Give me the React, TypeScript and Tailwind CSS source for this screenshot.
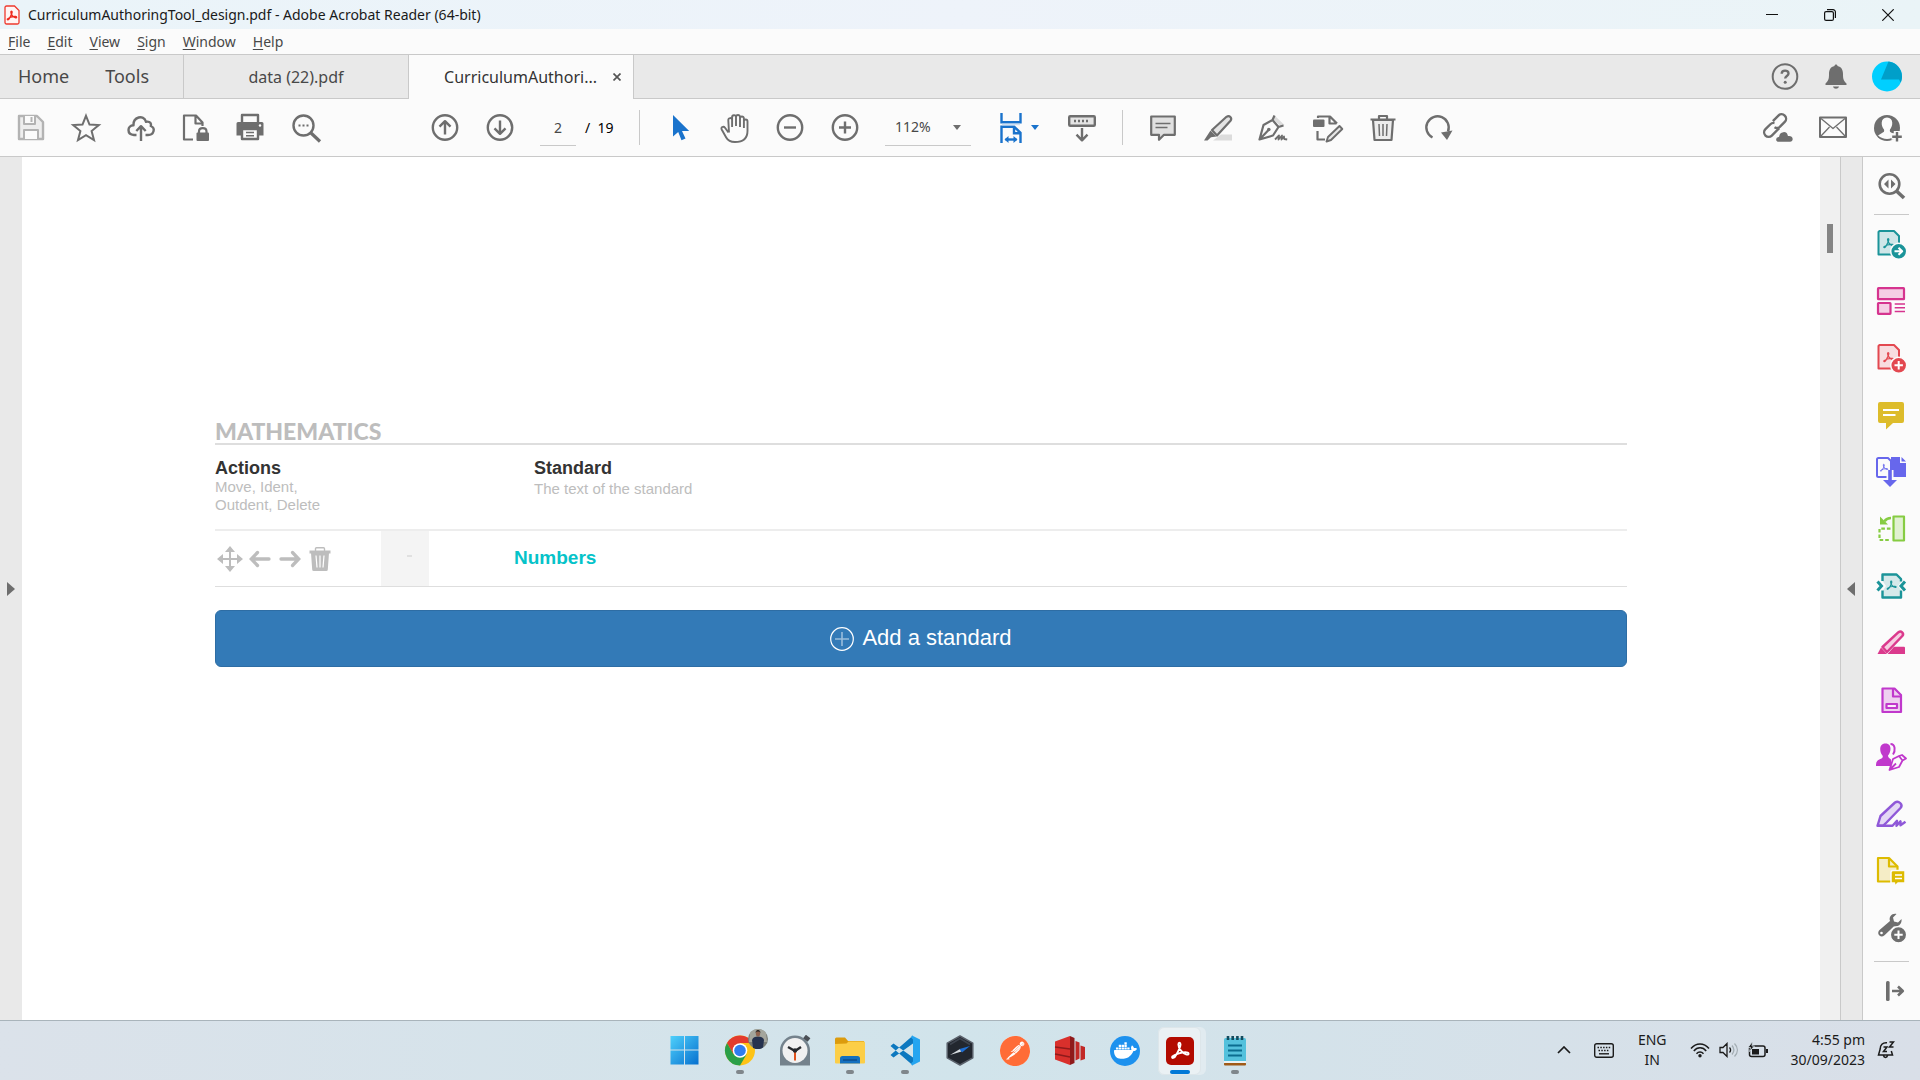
import type { ReactNode } from "react";
import { SiDocker, SiPostman } from "react-icons/si";

const G = "#6e6e6e";
const TREFOIL =
  "M-7 5C-8 7-5 7-3.5 3.5C-1.5 0 .5-3.5.5-6C.5-8-1.5-8-1.5-6C-1.5-2 2.5 2 5.5 3C8.5 4 8.5 1.5 6 1.2C2 1-4 2.5-7 5Z";

function Icon({ children, stroke = G, w = 2.4 }: { children: ReactNode; stroke?: string; w?: number }) {
  return (
    <svg
      viewBox="0 0 32 32"
      className="size-8 shrink-0"
      fill="none"
      stroke={stroke}
      strokeWidth={w}
      strokeLinejoin="round"
      aria-hidden="true"
    >
      {children}
    </svg>
  );
}

function ToolButton({ label, children }: { label: string; children: ReactNode }) {
  return (
    <button aria-label={label} className="flex h-full w-[55px] shrink-0 items-center justify-center">
      {children}
    </button>
  );
}

function SideButton({ label, children }: { label: string; children: ReactNode }) {
  return (
    <button aria-label={label} className="flex h-[57px] w-full shrink-0 items-center justify-center">
      {children}
    </button>
  );
}

function TaskButton({ label, open, children }: { label: string; open?: boolean; children: ReactNode }) {
  return (
    <button aria-label={label} className="relative flex h-full w-[55px] items-center justify-center">
      {children}
      {open && <span className="absolute bottom-[6px] h-1 w-2 rounded-full bg-[#7f868b]" />}
    </button>
  );
}

function TitleBar() {
  return (
    <header className="flex h-[29px] items-center bg-gradient-to-r from-[#eaf4f9] via-[#eef3fa] to-[#eaf4f7]">
      <svg viewBox="0 0 16 20" className="ml-1 h-5 w-4" aria-hidden="true">
        <path d="M2.500 1h8L15 5.500V17.500a1.500 1.500 0 0 1-1.500 1.500h-11A1.500 1.500 0 0 1 1 17.500v-15A1.500 1.500 0 0 1 2.500 1z" fill="#fff5f4" stroke="#ee3a2e" strokeWidth="1.300" />
        <g transform="translate(7.800 10.800) scale(.62)">
          <path d={TREFOIL} fill="none" stroke="#ee2a1e" strokeWidth="2.200" />
        </g>
      </svg>
      <h1 className="ml-2 text-sm text-[#1a1a1a]">CurriculumAuthoringTool_design.pdf - Adobe Acrobat Reader (64-bit)</h1>
      <div className="ml-auto flex h-full pr-[3px]">
        <button aria-label="Minimize" className="flex w-[58px] items-center justify-center">
          <svg viewBox="0 0 12 12" className="size-3" stroke="#111"><path d="M0 5.500h12" /></svg>
        </button>
        <button aria-label="Restore" className="flex w-[58px] items-center justify-center">
          <svg viewBox="0 0 12 12" className="size-3" fill="none" stroke="#111" strokeWidth="1.200">
            <rect x=".6" y="2.600" width="8.800" height="8.800" rx="1.500" />
            <path d="M3 .7h6a2.400 2.400 0 0 1 2.400 2.400V9" />
          </svg>
        </button>
        <button aria-label="Close" className="flex w-[58px] items-center justify-center">
          <svg viewBox="0 0 12 12" className="size-3" stroke="#111" strokeWidth="1.200"><path d="M.3.3l11.400 11.400M11.700.3L.3 11.700" /></svg>
        </button>
      </div>
    </header>
  );
}

const MENU = ["File", "Edit", "View", "Sign", "Window", "Help"];

function MenuBar() {
  return (
    <nav className="flex h-[26px] items-center gap-[17px] border-b border-[#c9c9c9] bg-[#fbfbfb] pl-2 text-sm text-[#484848]">
      {MENU.map((m) => (
        <button key={m}>
          <span className="underline underline-offset-2">{m[0]}</span>
          {m.slice(1)}
        </button>
      ))}
    </nav>
  );
}

function Tabs() {
  return (
    <div className="flex h-11 bg-[#e9e9e9] text-[#484848]">
      <div className="flex w-[184px] items-center gap-9 border-r border-b border-[#c9c9c9] pb-0.5 pl-[18px] text-lg">
        <button>Home</button>
        <button>Tools</button>
      </div>
      <button className="w-[225px] border-r border-b border-[#c9c9c9] text-base">data (22).pdf</button>
      <div className="flex w-[225px] items-center justify-end border-r border-[#c9c9c9] bg-[#fbfbfb] pr-3">
        <button className="text-base text-[#333]">CurriculumAuthori...</button>
        <button aria-label="Close tab" className="ml-4">
          <svg viewBox="0 0 8 8" className="size-2" stroke="#555" strokeWidth="1.700"><path d="M.5.5l7 7M7.500.5l-7 7" /></svg>
        </button>
      </div>
      <div className="flex grow items-center justify-end border-b border-[#c9c9c9] pr-2">
        <button aria-label="Help" className="flex w-[51px] justify-center">
          <Icon w={2}>
            <circle cx="16" cy="15.500" r="12.300" />
            <path d="M12.700 12.700c0-4.200 6.800-4 6.800-.3 0 2.600-3.300 2.500-3.300 5.100" strokeWidth="2.400" />
            <circle cx="16.200" cy="21.300" r="1.500" fill={G} stroke="none" />
          </Icon>
        </button>
        <button aria-label="Notifications" className="flex w-[51px] justify-center">
          <Icon>
            <path d="M14.500 5c0-2 3-2 3 0 4 .8 5.500 4 5.500 8 0 5 .5 6.500 3.500 9.500V24h-21v-1.500C8.500 19.500 9 18 9 13c0-4 1.500-7.200 5.500-8zM13 25.500h6c-.8 2.900-5.200 2.900-6 0z" fill={G} stroke="none" />
          </Icon>
        </button>
        <button aria-label="Account" className="flex w-[51px] justify-center">
          <Icon>
            <circle cx="16" cy="15.500" r="15" fill="#00cfff" stroke="none" />
            <path d="M17.500.6C26 1.700 31 8.500 31 15.500c0 2.300-.5 4.200-1.300 6l-1.700-3H10z" fill="#009fc9" stroke="none" />
          </Icon>
        </button>
      </div>
    </div>
  );
}

function Toolbar() {
  return (
    <div role="toolbar" className="flex h-[58px] items-center border-b border-[#c9c9c9] bg-[#fbfbfb] pl-[3px] text-sm">
      <ToolButton label="Save">
        <Icon stroke="#b3b3b3">
          <path d="M4 4h18l6 6v17H4z" fill="#eee" />
          <path d="M9 4v8h11V4M9 27v-9h14v9" fill="#fbfbfb" strokeWidth="2" />
          <path d="M16.500 5v5" strokeWidth="2" />
        </Icon>
      </ToolButton>
      <ToolButton label="Star">
        <Icon w={2}>
          <path d="M16 3.800l3.500 8.700 9.300.6-7.200 5.900 2.400 9.100-8-5-8 5 2.400-9.100-7.200-5.900 9.300-.6z" strokeLinejoin="miter" />
        </Icon>
      </ToolButton>
      <ToolButton label="Upload">
        <Icon>
          <path d="M11.500 23H9c-7.500-.5-7-9.500-.5-9.700C8 5 18.500 2 21 9.800c4.500-.8 5.500 2 4.800 4.200 5 2 3.200 9-2.800 9h-2.500" />
          <path d="M16 29V14.500M11.300 19l4.700-4.800 4.700 4.800" />
        </Icon>
      </ToolButton>
      <ToolButton label="Protect">
        <Icon w={2.2}>
          <path d="M13 27.500H4v-24h12l6.500 7V14M15.500 4v7.500h7" />
          <rect x="16.500" y="20.500" width="12.500" height="8.500" rx="1" fill={G} stroke="none" />
          <path d="M19 21v-1.500c0-4.500 7.500-4.500 7.500 0V21" />
        </Icon>
      </ToolButton>
      <ToolButton label="Print">
        <Icon>
          <path d="M7 10.500V3h16v7.500" />
          <path d="M3 10h24a1.500 1.500 0 0 1 1.500 1.500v12H24v-6H6v6H1.500v-12A1.500 1.500 0 0 1 3 10z" fill={G} stroke="none" />
          <path d="M7 17h16v10H7z" fill="#fbfbfb" />
          <path d="M11 20.500h8M11 23.700h8" strokeWidth="1.500" />
          <circle cx="25" cy="13.500" r="1.200" fill="#fff" stroke="none" />
        </Icon>
      </ToolButton>
      <ToolButton label="Find">
        <Icon>
          <circle cx="13.500" cy="13.500" r="10" />
          <path d="M20.500 20.500L30 29.500" strokeWidth="3.200" />
          <path d="M8.500 13.500h2M12.500 13.500h2M16.500 13.500h2" strokeWidth="2" />
        </Icon>
      </ToolButton>

      <div className="ml-[84px] flex h-full">
        <ToolButton label="Previous page">
          <Icon>
            <circle cx="16" cy="15.500" r="12.200" />
            <path d="M16 22.500v-13M10.500 14.700L16 9.200l5.500 5.500" />
          </Icon>
        </ToolButton>
        <ToolButton label="Next page">
          <Icon>
            <circle cx="16" cy="15.500" r="12.200" />
            <path d="M16 8.500v13M10.500 16.300l5.500 5.500 5.500-5.500" />
          </Icon>
        </ToolButton>
      </div>
      <input
        aria-label="Page number"
        defaultValue="2"
        className="ml-[13px] h-9 w-9 border-b border-[#c9c9c9] bg-transparent text-center text-[#484848]"
      />
      <span className="ml-[9px] w-[54px] text-black">/&nbsp; 19</span>
      <div className="h-[35px] w-px bg-[#c9c9c9]" />

      <div className="ml-3 flex h-full">
        <ToolButton label="Select">
          <Icon>
            <path d="M9 3v21.500l5.200-4.500 3.300 8.300 4-1.700-3.500-7.600h7.200z" fill="#1a73cc" stroke="none" />
          </Icon>
        </ToolButton>
        <ToolButton label="Pan">
          <Icon w={1.900}>
            <path d="M9.500 20.500L6 15.800c-1.500-2-4.500-.7-3.300 1.700l4.500 8C9 28.800 12 30 16 30c8 0 12.500-4 12.500-11V9.500c0-2.600-3.600-2.600-3.600 0V16M24.900 15V6.500c0-2.600-3.900-2.600-3.900 0V15M21 14V5c0-2.600-4-2.600-4 0v9M17 14V5c0-2.600-4.200-2.200-3.900.5V15M13.100 8c0-2.600-3.900-2.600-3.800.2l.7 12.300" />
          </Icon>
        </ToolButton>
        <ToolButton label="Zoom out">
          <Icon>
            <circle cx="16" cy="15.500" r="12.200" />
            <path d="M10 15.500h12" />
          </Icon>
        </ToolButton>
        <ToolButton label="Zoom in">
          <Icon>
            <circle cx="16" cy="15.500" r="12.200" />
            <path d="M10 15.500h12M16 9.500v12" />
          </Icon>
        </ToolButton>
      </div>
      <div className="relative ml-[13px] flex w-[86px] items-center">
        <select
          aria-label="Zoom level"
          className="h-9 w-full appearance-none border-b border-[#c9c9c9] bg-transparent pl-2.5 text-[#484848]"
        >
          <option>112%</option>
        </select>
        <svg viewBox="0 0 8 5" className="pointer-events-none absolute right-2.5 h-[5px] w-2" fill={G}><path d="M0 0h8L4 5z" /></svg>
      </div>
      <button aria-label="Fit width" className="ml-6 flex h-full w-[59px] items-center">
        <Icon stroke="#1a73cc">
          <path d="M6.500 1v9.300h19V1M6.500 31V14.800h12.700l6.300 6V31M19 15v6.300h6" strokeLinejoin="miter" />
          <path d="M7 12.500h18" stroke="#cfe0f2" strokeWidth="1.500" />
          <path d="M10.500 27.500h11" />
          <path d="M13.500 24L9.500 27.500l4 3.500zM18.500 24l4 3.500-4 3.500z" fill="#1a73cc" stroke="none" />
        </Icon>
        <svg viewBox="0 0 8 5" className="ml-1 h-[5px] w-2" fill="#1a73cc"><path d="M0 0h8L4 5z" /></svg>
      </button>
      <ToolButton label="Read mode">
        <Icon>
          <rect x="3.200" y="4.200" width="25.600" height="9.600" rx="1" fill="#e4e4e4" />
          <path d="M8 9h2M12 9h2M16 9h2M20 9h2" />
          <path d="M16 16v12M10.500 22.700l5.500 5.600 5.500-5.600" />
        </Icon>
      </ToolButton>
      <div className="ml-[13px] h-[35px] w-px bg-[#c9c9c9]" />

      <div className="ml-3 flex h-full">
        <ToolButton label="Comment">
          <Icon w={2.200}>
            <path d="M4.200 4.500h23.600v18.300H17l-5 5v-5H4.200z" fill="#e0e0e0" />
            <path d="M8.500 11.500h15M8.500 15.500h12" strokeWidth="1.500" />
          </Icon>
        </ToolButton>
        <ToolButton label="Highlight">
          <Icon w={2.2}>
            <path d="M11 28.500l8-6h11v6z" fill="#dcdcdc" stroke="none" />
            <path d="M10 18L24.500 4.800c3-2 6 1.200 4 4L15 23.500z" fill="#e4e4e4" />
            <path d="M8.500 18.500l6 6-5.500.8L5.500 28.500H2z" fill={G} stroke="none" />
          </Icon>
        </ToolButton>
        <ToolButton label="Sign">
          <Icon w={2.200}>
            <path d="M17.500 3.500l10 9.500-3.500 1.500-8-7.500z" fill="#dcdcdc" stroke="none" />
            <path d="M17.500 3.500L15.500 8 6.500 13 2.500 27.500 16 23.500 21.500 15l5-1.500M15.500 8l6 7M3 27l8.500-9" />
            <circle cx="11.800" cy="17.500" r="1.800" fill={G} stroke="none" />
            <path d="M18 27.500l4-4-.5 4 3.500-4-.5 4 2.500-3 .2 2.500 3 .5" strokeWidth="1.800" />
          </Icon>
        </ToolButton>
        <ToolButton label="Edit">
          <Icon w={2.200}>
            <path d="M6 6V4.500h12l7 7M17.500 5v6.500h7M5.500 19v8.500h7.500" />
            <rect x="1" y="7.500" width="11.500" height="7.500" rx="1" fill={G} stroke="none" />
            <path d="M14.500 29.500l1.500-4.500 11.500-11 2.800 3L19 28z" fill="#e8e8e8" strokeWidth="1.900" />
          </Icon>
        </ToolButton>
        <ToolButton label="Delete">
          <Icon w={2.200}>
            <path d="M3.500 7.500h25M12 7V4h8v3" />
            <path d="M6 8h20l-1.500 20h-17z" fill="#ededed" />
            <path d="M12 12l.5 12M16 12v12M20 12l-.5 12" strokeWidth="1.500" />
          </Icon>
        </ToolButton>
        <ToolButton label="Rotate">
          <Icon>
            <path d="M10.500 25.500A11.200 11.200 0 1 1 26 19.500" />
            <path d="M19 20.500l11.500-2-5.500 9.500z" fill={G} stroke="none" />
          </Icon>
        </ToolButton>
      </div>

      <div className="ml-auto flex h-full pr-[5px]">
        <ToolButton label="Share link">
          <Icon>
            <g transform="rotate(-45 13 14)">
              <path d="M14.500 18.500H4a4.500 4.500 0 0 1 0-9h7a4.500 4.500 0 0 1 3.800 2" />
              <path d="M11.800 14.500a4.500 4.500 0 0 0 4 3.500h7a4.500 4.500 0 0 0 0-9H15" />
            </g>
            <path d="M17 30.500c-5 0-4.500-6-.5-6.300.5-5.500 8.500-7 10-1 6-.5 6.500 7.300 1.500 7.300z" fill={G} stroke="#fbfbfb" strokeWidth="1.500" />
          </Icon>
        </ToolButton>
        <ToolButton label="Email">
          <Icon w={2}>
            <rect x="3" y="5.500" width="26" height="19.500" />
            <path d="M4 6.500l12 10 12-10M4 24l8.500-9M28 24l-8.500-9" strokeWidth="1.300" />
          </Icon>
        </ToolButton>
        <ToolButton label="Add people">
          <Icon>
            <circle cx="15" cy="16" r="13" fill={G} stroke="none" />
            <path d="M15 5.500c7 0 6 9 3 12-.5 2 0 2.500 2 3.500l4 2.500c-5 4.500-13 4.500-18 0l4-2.500c2-1 2.500-1.500 2-3.500-3-3-4-12 3-12z" fill="#fbfbfb" stroke="none" />
            <path d="M25 19v11M19.500 24.500h11" stroke="#fbfbfb" strokeWidth="6.500" />
            <path d="M25 20v9.500M20.200 24.700h9.600" />
          </Icon>
        </ToolButton>
      </div>
    </div>
  );
}

function DocMark({ color, x = 13.5, y = 15.5, s = 0.65 }: { color: string; x?: number; y?: number; s?: number }) {
  return (
    <g transform={`translate(${x} ${y}) scale(${s})`}>
      <path d={TREFOIL} fill="none" stroke={color} strokeWidth="1.900" />
    </g>
  );
}

function ToolsPane() {
  return (
    <aside className="flex w-[58px] shrink-0 flex-col items-center border-l border-[#c9c9c9] bg-[#fbfbfb] pr-px">
      <SideButton label="Search tools">
        <Icon w={2.600}>
          <circle cx="14.500" cy="14" r="9.800" />
          <path d="M21.500 21l7.500 7" strokeWidth="3.600" />
          <path d="M13.500 9.500v9L9 14zM16 9.500v9l4.500-4.500z" fill={G} stroke="none" />
        </Icon>
      </SideButton>
      <hr className="w-[35px] border-[#c9c9c9]" />
      <SideButton label="Export PDF">
        <Icon stroke="#1b9499" w={2}>
          <path d="M4.500 3h14.500l5 5v18.500h-20.500V4z" fill="#cfe6e8" />
          <DocMark color="#1b9499" />
          <circle cx="23.700" cy="23.300" r="8" fill="#1b9499" stroke="#fbfbfb" strokeWidth="1.500" />
          <path d="M19.500 23.300h7M23.500 19.800l3.700 3.500-3.700 3.500" stroke="#fff" />
        </Icon>
      </SideButton>
      <SideButton label="Organize pages">
        <Icon stroke="#d6348f" w={2.200}>
          <rect x="3" y="3.200" width="26" height="11" rx=".5" fill="#f5cfe5" />
          <rect x="3" y="18" width="12.500" height="10.800" rx=".5" fill="#f5cfe5" />
          <path d="M19.700 19h10.300M19.700 22.800h10.300M19.700 26.600h10.300" strokeWidth="1.500" />
        </Icon>
      </SideButton>
      <SideButton label="Create PDF">
        <Icon stroke="#e34850" w={2}>
          <path d="M4.500 3h14.500l5 5v18.500h-20.500V4z" fill="#f8dcdf" />
          <DocMark color="#e34850" />
          <circle cx="23.700" cy="23.300" r="8" fill="#e34850" stroke="#fbfbfb" strokeWidth="1.500" />
          <path d="M19.500 23.300h8.400M23.700 19.100v8.400" stroke="#fff" />
        </Icon>
      </SideButton>
      <SideButton label="Add comments">
        <Icon>
          <path d="M5 3h22a2 2 0 0 1 2 2v17a2 2 0 0 1-2 2h-9l-7 6.500V24H5a2 2 0 0 1-2-2V5a2 2 0 0 1 2-2z" fill="#ddbc2b" stroke="none" />
          <path d="M8 11h16M8 16h12.500" stroke="#fff" strokeWidth="2" />
        </Icon>
      </SideButton>
      <SideButton label="Combine files">
        <Icon stroke="#6767ec" w={2}>
          <path d="M16 1h9v6h6v14H16z" fill="#6767ec" stroke="none" />
          <path d="M26.500 1L31 5.500h-4.500z" fill="#6767ec" stroke="none" />
          <path d="M2 3.500A1.500 1.500 0 0 1 3.500 2h9.500l3 3v16H3.500A1.500 1.500 0 0 1 2 19.500z" fill="#fbfbfb" />
          <DocMark color="#6767ec" x={9} y={12} s={0.5} />
          <path d="M15 14v11" stroke="#fbfbfb" strokeWidth="7" />
          <path d="M15 14v12" strokeWidth="3.600" />
          <path d="M8 24h14l-7 7z" fill="#6767ec" stroke="none" />
        </Icon>
      </SideButton>
      <SideButton label="Crop pages">
        <Icon stroke="#86cc42" w={2.200}>
          <rect x="18.500" y="3.500" width="10.500" height="24" fill="#e1f1d2" />
          <path d="M15.500 15.700H4.500v11.300H15.500" strokeDasharray="3.600 2" />
          <path d="M16 5c-3 0-5 1-6.500 3.200" strokeWidth="2.600" />
          <path d="M5 3.500v8h8z" fill="#86cc42" stroke="none" />
        </Icon>
      </SideButton>
      <SideButton label="Compress PDF">
        <Icon stroke="#1b9499" w={2.400}>
          <path d="M7.500 4.500h14L26 9v3l-3 4 3 4v7.500H7.500V21l3.500-5-3.500-5z" fill="#d5e9ea" stroke="none" />
          <path d="M7.500 11V4.500h14L26 9v2.500M7.500 20.500v7H26v-7" />
          <DocMark color="#1b9499" x={16.5} y={15.5} s={0.6} />
          <path d="M2.500 11.500L6.500 16l-4 4.500M30 11.500L26 16l4 4.500" strokeWidth="3" strokeLinejoin="miter" />
        </Icon>
      </SideButton>
      <SideButton label="Redact">
        <Icon stroke="#db3a8d" w={2.500}>
          <path d="M19 19.700h10a1 1 0 0 1 1 1V27H12.500z" fill="#db3a8d" stroke="none" />
          <path d="M7.500 20L23.500 5.200c2.500-2 6 1 3.800 3.800L12 25z" fill="#f7cfe2" />
          <path d="M6 20.500l6 6.500H2.500z" fill="#db3a8d" stroke="none" />
        </Icon>
      </SideButton>
      <SideButton label="Prepare form">
        <Icon stroke="#c038cc" w={2.200}>
          <path d="M7.500 4.500h12l6.500 6.500v17H7.500z" fill="#eed0f0" />
          <path d="M18 5v7.500h8" />
          <rect x="11.500" y="20" width="10.500" height="4" fill="#fbeefb" />
        </Icon>
      </SideButton>
      <SideButton label="Request e-signatures">
        <Icon stroke="#c038cc" w={2}>
          <path d="M10.500 2.500c7 0 5.500 9 2.500 12 0 2.500 2 3 3 4v6.500H1c0-5 1.500-6 5.500-7.500 1.500-1 1.500-1.500 1-3-3-3-4-12 3-12z" fill="#c038cc" stroke="none" />
          <path d="M15.500 3c5 0 5 7 2.500 10.500" />
          <path d="M24 15l-6 3-3.500 11 9.500-3 3.500-6.500zM15 28.500l6-6M24 15l3.500 4.500 3.500-2-4-3.500z" fill="#fbfbfb" strokeWidth="1.800" />
        </Icon>
      </SideButton>
      <SideButton label="Fill and sign">
        <Icon stroke="#8f58d8" w={2.400}>
          <path d="M5.500 18L20 4.500c3.500-2.500 8.500 2 5.500 5.500L11.500 24.500 8 27.800H2.500z" fill="#e4d8f5" />
          <path d="M3 27.800h14.500l4.500-5-.5 5 4-4.500v4l5-3.500" />
        </Icon>
      </SideButton>
      <SideButton label="Send for comments">
        <Icon stroke="#ddbb00" w={2.200}>
          <path d="M3 3h11l8.500 8.500v15H3z" fill="#f5edc6" />
          <path d="M14 3v8.500h8.500" />
          <path d="M17 15.500h13V28h-7L19.500 31.500V28H16V17z" fill="#ddbb00" stroke="#fbfbfb" strokeWidth="1.500" />
          <path d="M20 20h7M20 23.500h7" stroke="#fff" strokeWidth="1.500" />
        </Icon>
      </SideButton>
      <SideButton label="More tools">
        <Icon>
          <path d="M21.500 2L18 5.500l1 4 4 1L26.500 7c.8 5-3.500 8.500-7.500 7.200l-9.500 9c-4 3.500-8.500-1.500-5-5.200l10.500-9C13.500 5 17 1 21.500 2z" fill={G} stroke="none" />
          <circle cx="6.500" cy="21" r="1.300" fill="#fff" stroke="none" />
          <circle cx="23.500" cy="22.700" r="8.200" fill={G} stroke="#fbfbfb" strokeWidth="1.500" />
          <path d="M19.300 22.700h8.400M23.500 18.500v8.400" stroke="#fff" strokeWidth="2" />
        </Icon>
      </SideButton>
      <hr className="mt-[5px] w-[35px] border-[#c9c9c9]" />
      <SideButton label="Collapse pane">
        <Icon>
          <rect x="11" y="6" width="3.600" height="20" rx="1.500" fill={G} stroke="none" />
          <path d="M17 16h10.500M23 11.500l4.800 4.500-4.800 4.500" strokeWidth="2.600" />
        </Icon>
      </SideButton>
    </aside>
  );
}

function Document() {
  return (
    <main className="grow bg-white px-[193px] pt-[262px] font-['Liberation_Sans',Arial,sans-serif]">
      <h2 className="border-b-2 border-[#dedede] font-['Lato',sans-serif] text-[23px] leading-6 font-black text-[#bdbdbd]">
        MATHEMATICS
      </h2>
      <table className="w-full table-fixed border-separate border-spacing-0 text-left">
        <colgroup>
          <col className="w-[166px]" />
          <col className="w-12" />
          <col />
        </colgroup>
        <thead>
          <tr className="align-top text-[15px] leading-[18px] text-[#bdbdbd]">
            <th scope="col" colSpan={2} className="border-b-2 border-[#ededed] pt-[13px] pb-[15px] font-normal">
              <div className="text-[18px] leading-5 font-bold text-[#333]">Actions</div>
              Move, Ident,
              <br />
              Outdent, Delete
            </th>
            <th scope="col" className="border-b-2 border-[#ededed] pt-[13px] pl-[105px] font-normal">
              <div className="mb-0.5 text-[18px] leading-5 font-bold text-[#333]">Standard</div>
              The text of the standard
            </th>
          </tr>
        </thead>
        <tbody>
          <tr>
            <td className="h-14 border-b border-[#dedede]">
              <div className="flex items-center gap-[6px] pl-0.5">
                <button aria-label="Move">
                  <svg viewBox="0 0 26 26" className="size-[26px]" fill="#bdbdbd">
                    <path d="M13 0l5 6h-10zM13 26l5-6h-10zM0 13l6-5v10zM26 13l-6-5v10z" />
                    <path d="M13 4v18M4 13h18" stroke="#bdbdbd" strokeWidth="2" />
                  </svg>
                </button>
                <button aria-label="Outdent">
                  <svg viewBox="0 0 22 22" className="size-[22px]" fill="none" stroke="#bdbdbd" strokeWidth="3.300" strokeLinecap="round">
                    <path d="M20 11H3M8.500 4.500L2.300 11l6.200 6.500" />
                  </svg>
                </button>
                <button aria-label="Indent" className="ml-0.5">
                  <svg viewBox="0 0 22 22" className="size-[22px]" fill="none" stroke="#bdbdbd" strokeWidth="3.300" strokeLinecap="round">
                    <path d="M2 11h17M13.500 4.500l6.200 6.500-6.200 6.500" />
                  </svg>
                </button>
                <button aria-label="Delete row" className="ml-0.5">
                  <svg viewBox="0 0 22 24" className="h-6 w-[22px]" fill="#bdbdbd">
                    <path d="M6.500 4V1.800a1 1 0 0 1 1-1h7a1 1 0 0 1 1 1V4" fill="none" stroke="#bdbdbd" strokeWidth="1.400" />
                    <path d="M.5 3.500h21v3h-21zM2 6h18l-1.200 16.500a1.500 1.500 0 0 1-1.500 1.500H4.700a1.500 1.500 0 0 1-1.500-1.500z" />
                    <path d="M7 8.500l1 12M11 8.500v12M15 8.500l-1 12" stroke="#fff" strokeWidth="1.200" />
                  </svg>
                </button>
              </div>
            </td>
            <td className="border-b border-[#dedede] bg-[#f4f4f4] pb-1.5">
              <div className="ml-[26px] h-0.5 w-[5px] bg-[#e0e0e0]" />
            </td>
            <td className="border-b border-[#dedede] pl-[85px] text-[19px] font-bold text-[#05c3c9]">Numbers</td>
          </tr>
        </tbody>
      </table>
      <button className="mt-[23px] flex h-[57px] w-full items-center justify-center gap-2 rounded-md border border-[#2e6da4] bg-[#337ab7] text-[22px] text-white">
        <svg viewBox="0 0 24 24" className="size-6" fill="none" stroke="#fff">
          <circle cx="12" cy="12" r="11.300" strokeWidth="1.200" />
          <path d="M5 12h14M12 5v14" strokeWidth="1.600" opacity=".5" />
        </svg>
        <span className="pb-0.5">Add a standard</span>
      </button>
    </main>
  );
}

function Workspace() {
  return (
    <div className="flex grow">
      <button aria-label="Show navigation pane" className="flex w-[22px] shrink-0 items-center justify-center bg-[#e9e9e9]">
        <svg viewBox="0 0 8 14" className="h-3.5 w-2" fill={G}><path d="M0 0v14l8-7z" /></svg>
      </button>
      <Document />
      <div className="w-5 shrink-0 bg-[#f0f0f0]">
        <div className="mx-auto mt-[67px] h-[29px] w-1.5 bg-[#858585]" />
      </div>
      <button aria-label="Hide tools pane" className="flex w-[22px] shrink-0 items-center justify-center border-l border-[#c9c9c9] bg-[#e9e9e9] pr-px">
        <svg viewBox="0 0 8 14" className="h-3.5 w-2" fill={G}><path d="M8 0v14L0 7z" /></svg>
      </button>
      <ToolsPane />
    </div>
  );
}

function Taskbar() {
  return (
    <footer className="flex h-[60px] items-center border-t border-[#a9b4bb] bg-gradient-to-r from-[#dbe2ea] via-[#d1e4eb] to-[#d9dfe8] text-[#1b1b1b]">
      <div className="flex-1" />
      <div className="flex h-full pl-[25px]">
        <TaskButton label="Start">
          <Icon>
            <defs>
              <linearGradient id="win" x1="0" y1="0" x2="1" y2="1">
                <stop offset="0" stopColor="#4fd0fb" />
                <stop offset="1" stopColor="#0670cf" />
              </linearGradient>
            </defs>
            <path d="M1.500 1H15v13.500H1.500zM16 1h13.500v13.500H16zM1.500 15.500H15v14H1.500zM16 15.500h13.500v14H16z" fill="url(#win)" stroke="none" />
          </Icon>
        </TaskButton>
        <TaskButton label="Chrome" open>
          <Icon>
            <g stroke="none">
              <circle cx="16" cy="15.500" r="15" fill="#fdc316" />
              <path d="M16 15.500L3 8A15 15 0 0 1 29 8H16z" fill="#e33b2e" />
              <path d="M3 8l6.500 11.300L16 8.500z" fill="#e33b2e" />
              <path d="M3 8a15 15 0 0 0 13 22.500l6.500-11-13-.2z" fill="#2a9f48" />
              <circle cx="16" cy="15.500" r="7.300" fill="#fff" />
              <circle cx="16" cy="15.500" r="5.800" fill="#2f7def" />
            </g>
          </Icon>
          <svg viewBox="0 0 20 20" className="absolute top-2 right-[6px] size-5 translate-x-1.5">
            <circle cx="10" cy="10" r="10" fill="#7b7f78" />
            <path d="M2 4a10 10 0 0 1 16 0l1 9H1z" fill="#a4a69d" />
            <path d="M5 19l-1-8c1-3 3-3.500 6-3.500S15 8 16 11l-1 7.500a10 10 0 0 1-10 .5z" fill="#26334f" />
            <ellipse cx="10" cy="4.500" rx="2.200" ry="3" fill="#8f6450" />
            <path d="M7.500 4c0-4 5-4 5 0l-1-1.500h-3z" fill="#1d1b1b" />
          </svg>
        </TaskButton>
        <TaskButton label="Clock">
          <Icon>
            <path d="M1 30.500v-15a15 15 0 0 1 30 0v15z" fill="#74828c" stroke="none" />
            <path d="M25.500 1.500l4.500 3.500" stroke="#4a4f55" strokeWidth="4.500" />
            <circle cx="16" cy="15.500" r="12.500" fill="#f1f1f1" stroke="none" />
            <path d="M9 12l7 4 6-4" stroke="#26292d" strokeWidth="2.400" />
            <path d="M16 17v8.500" stroke="#e0521d" strokeWidth="2" />
            <circle cx="16" cy="15.500" r="2.200" fill="#26292d" stroke="none" />
          </Icon>
        </TaskButton>
        <TaskButton label="File Explorer" open>
          <Icon>
            <g stroke="none">
              <path d="M1 4A1.500 1.500 0 0 1 2.500 2.500H11L14 6h16v7.500H1z" fill="#dc9b0d" />
              <path d="M1 9L12.500 8.500l2-2H30a1 1 0 0 1 1 1v20a1 1 0 0 1-1 1H2a1 1 0 0 1-1-1z" fill="#fcce47" />
              <path d="M6 28.500v-5A2.500 2.500 0 0 1 8.500 21h15a2.500 2.500 0 0 1 2.500 2.500v5z" fill="#1470bf" />
              <path d="M9 25h14" stroke="#0b4d8d" strokeWidth="1.500" />
            </g>
          </Icon>
        </TaskButton>
        <TaskButton label="Visual Studio Code" open>
          <Icon>
            <path d="M1.500 11l3-2.500L24 22.500v8zM1.500 20l3 2.500L24 8.500v-8z" fill="#0c78bf" stroke="none" />
            <path d="M23 .5l8 4v22l-8 4-1-2 2-2v-22l-2-2z" fill="#25a5f0" stroke="none" />
          </Icon>
        </TaskButton>
        <TaskButton label="Hex editor">
          <Icon>
            <path d="M16 1L28.800 8.200v14.600L16 30 3.200 22.800V8.200z" fill="#22272f" stroke="#5a616b" strokeWidth="1.500" />
            <path d="M6 9.500l10-6 10 6" stroke="#3d444f" strokeWidth="1.500" />
            <path d="M6 20l10-6 1.500 2.500z" fill="#d5dbe0" stroke="none" />
            <path d="M15.500 14L26 11l-8 6.500z" fill="#1d6fd4" stroke="none" />
          </Icon>
        </TaskButton>
        <TaskButton label="Postman">
          <span className="flex size-[30px] items-center justify-center rounded-full bg-white">
            <SiPostman className="size-[30px] text-[#ff6c37]" />
          </span>
        </TaskButton>
        <TaskButton label="Redshift">
          <Icon>
            <g stroke="none">
              <path d="M1 6.500L16 1v29L1 24.500z" fill="#d9302c" />
              <path d="M16 1l4.500 2v25L16 30z" fill="#8f1a1b" />
              <path d="M21.500 6l4 1.500v16l-4 2zM26.500 10.500L31 12v12l-4.500 1.500z" fill="#c22927" />
              <path d="M1 12l15 2M1 19l15 3" stroke="#8f1a1b" strokeWidth="1.500" />
            </g>
          </Icon>
        </TaskButton>
        <TaskButton label="Docker">
          <span className="flex size-[30px] items-center justify-center rounded-full bg-[#1d91ee]">
            <SiDocker className="size-[23px] text-white" />
          </span>
        </TaskButton>
        <button aria-label="Adobe Acrobat" className="relative flex h-full w-[55px] items-center justify-center">
          <span className="absolute left-[5px] h-12 w-12 rounded-md bg-[#e1ebf0]" />
          <span className="absolute left-[5px] h-12 w-[43px] rounded-md border border-[#dde6ea] bg-[#eaf1f4]" />
          <span className="relative flex size-7 items-center justify-center rounded-[5px] bg-[#b30b00]">
            <svg viewBox="-10 -10 20 20" className="size-[22px]" fill="none" stroke="#fff" strokeWidth="1.700"><path d={TREFOIL} /></svg>
          </span>
          <span className="absolute bottom-[6px] h-1 w-5 rounded-full bg-[#0078d7]" />
        </button>
        <TaskButton label="Notepad" open>
          <Icon>
            <g stroke="none">
              <rect x="5" y="3" width="22" height="25" rx="1.500" fill="#54c1dc" />
              <rect x="5" y="27.500" width="22" height="3" rx="1" fill="#a05a17" />
              <path d="M5 26h22v2H5z" fill="#e8f2f5" />
              <path d="M9 10.500h14M9 15.500h14M9 20.500h14" stroke="#0b6d8f" strokeWidth="2" />
              <path d="M9 1v4M13.700 1v4M18.400 1v4M23 1v4" stroke="#124b5e" strokeWidth="2.600" />
            </g>
          </Icon>
        </TaskButton>
      </div>
      <div className="flex h-full flex-1 items-center justify-end pr-[25px] pb-px">
        <button aria-label="Show hidden icons" className="mr-[23px]">
          <svg viewBox="0 0 14 8" className="h-2 w-3.5" fill="none" stroke="#1b1b1b" strokeWidth="1.700"><path d="M1 7l6-6 6 6" /></svg>
        </button>
        <svg viewBox="0 0 20 15" className="h-[15px] w-5" fill="none" stroke="#1b1b1b" strokeWidth="1.400">
          <rect x=".7" y=".7" width="18.600" height="13.600" rx="2" />
          <path d="M3.500 4.500h13M4.500 7.500h11" strokeDasharray="1.500 1.300" />
          <path d="M5 10.800h10" />
        </svg>
        <button className="ml-6 text-center text-sm leading-5">
          ENG
          <br />
          IN
        </button>
        <button aria-label="Network, sound, battery" className="ml-[23px] flex items-center gap-[9px]">
          <svg viewBox="0 0 20 16" className="h-4 w-5" fill="none" stroke="#1b1b1b" strokeWidth="1.500">
            <path d="M1 6.500c5-6 13-6 18 0M3.800 9c3.500-4.200 9-4.200 12.400 0M6.500 11.700c2-2.300 5-2.300 7 0" />
            <circle cx="10" cy="13.700" r="1.700" fill="#1b1b1b" stroke="none" />
          </svg>
          <svg viewBox="0 0 20 16" className="h-4 w-5" fill="none" stroke="#1b1b1b" strokeWidth="1.300">
            <path d="M1 5.500h3l4-4v13l-4-4H1zM10.500 5.500c1.300 1.500 1.300 3.500 0 5" />
            <path d="M13 3.500c2.500 3 2.500 6 0 9M15.500 1.500c3.800 4 3.800 9 0 13" stroke="#a3adb3" />
          </svg>
          <svg viewBox="0 0 20 16" className="h-4 w-5" fill="none" stroke="#1b1b1b" strokeWidth="1.500">
            <rect x="1.500" y="4" width="15.500" height="10.500" rx="2" />
            <path d="M4 12.500V7h7v5.500zM18 7h2v4h-2z" fill="#1b1b1b" stroke="none" />
            <path d="M4.500-.5L0 5.500h2.500L1.500 9.500 6.500 4H4z" fill="#1b1b1b" stroke="#d5e1e8" strokeWidth=".8" />
          </svg>
        </button>
        <button className="ml-[23px] text-right text-sm leading-5">
          4:55 pm
          <br />
          30/09/2023
        </button>
        <button aria-label="Notifications silenced" className="ml-3">
          <svg viewBox="0 0 18 18" className="size-[18px]" fill="none" stroke="#1b1b1b" strokeWidth="1.500">
            <path d="M10 1.700C5.500 1.200 3.200 4.500 3.200 8L1.500 14h14l-1.200-4M6.500 14.500c.5 2.500 3.500 2.500 4 0" />
            <path d="M6.500 6h3.500l-3.500 4.500H10M12.500 1h4l-4 5h4" />
          </svg>
        </button>
      </div>
    </footer>
  );
}

export default function App() {
  return (
    <div className="flex min-h-screen flex-col font-['Noto_Sans','Open_Sans',sans-serif]">
      <TitleBar />
      <MenuBar />
      <Tabs />
      <Toolbar />
      <Workspace />
      <Taskbar />
    </div>
  );
}
